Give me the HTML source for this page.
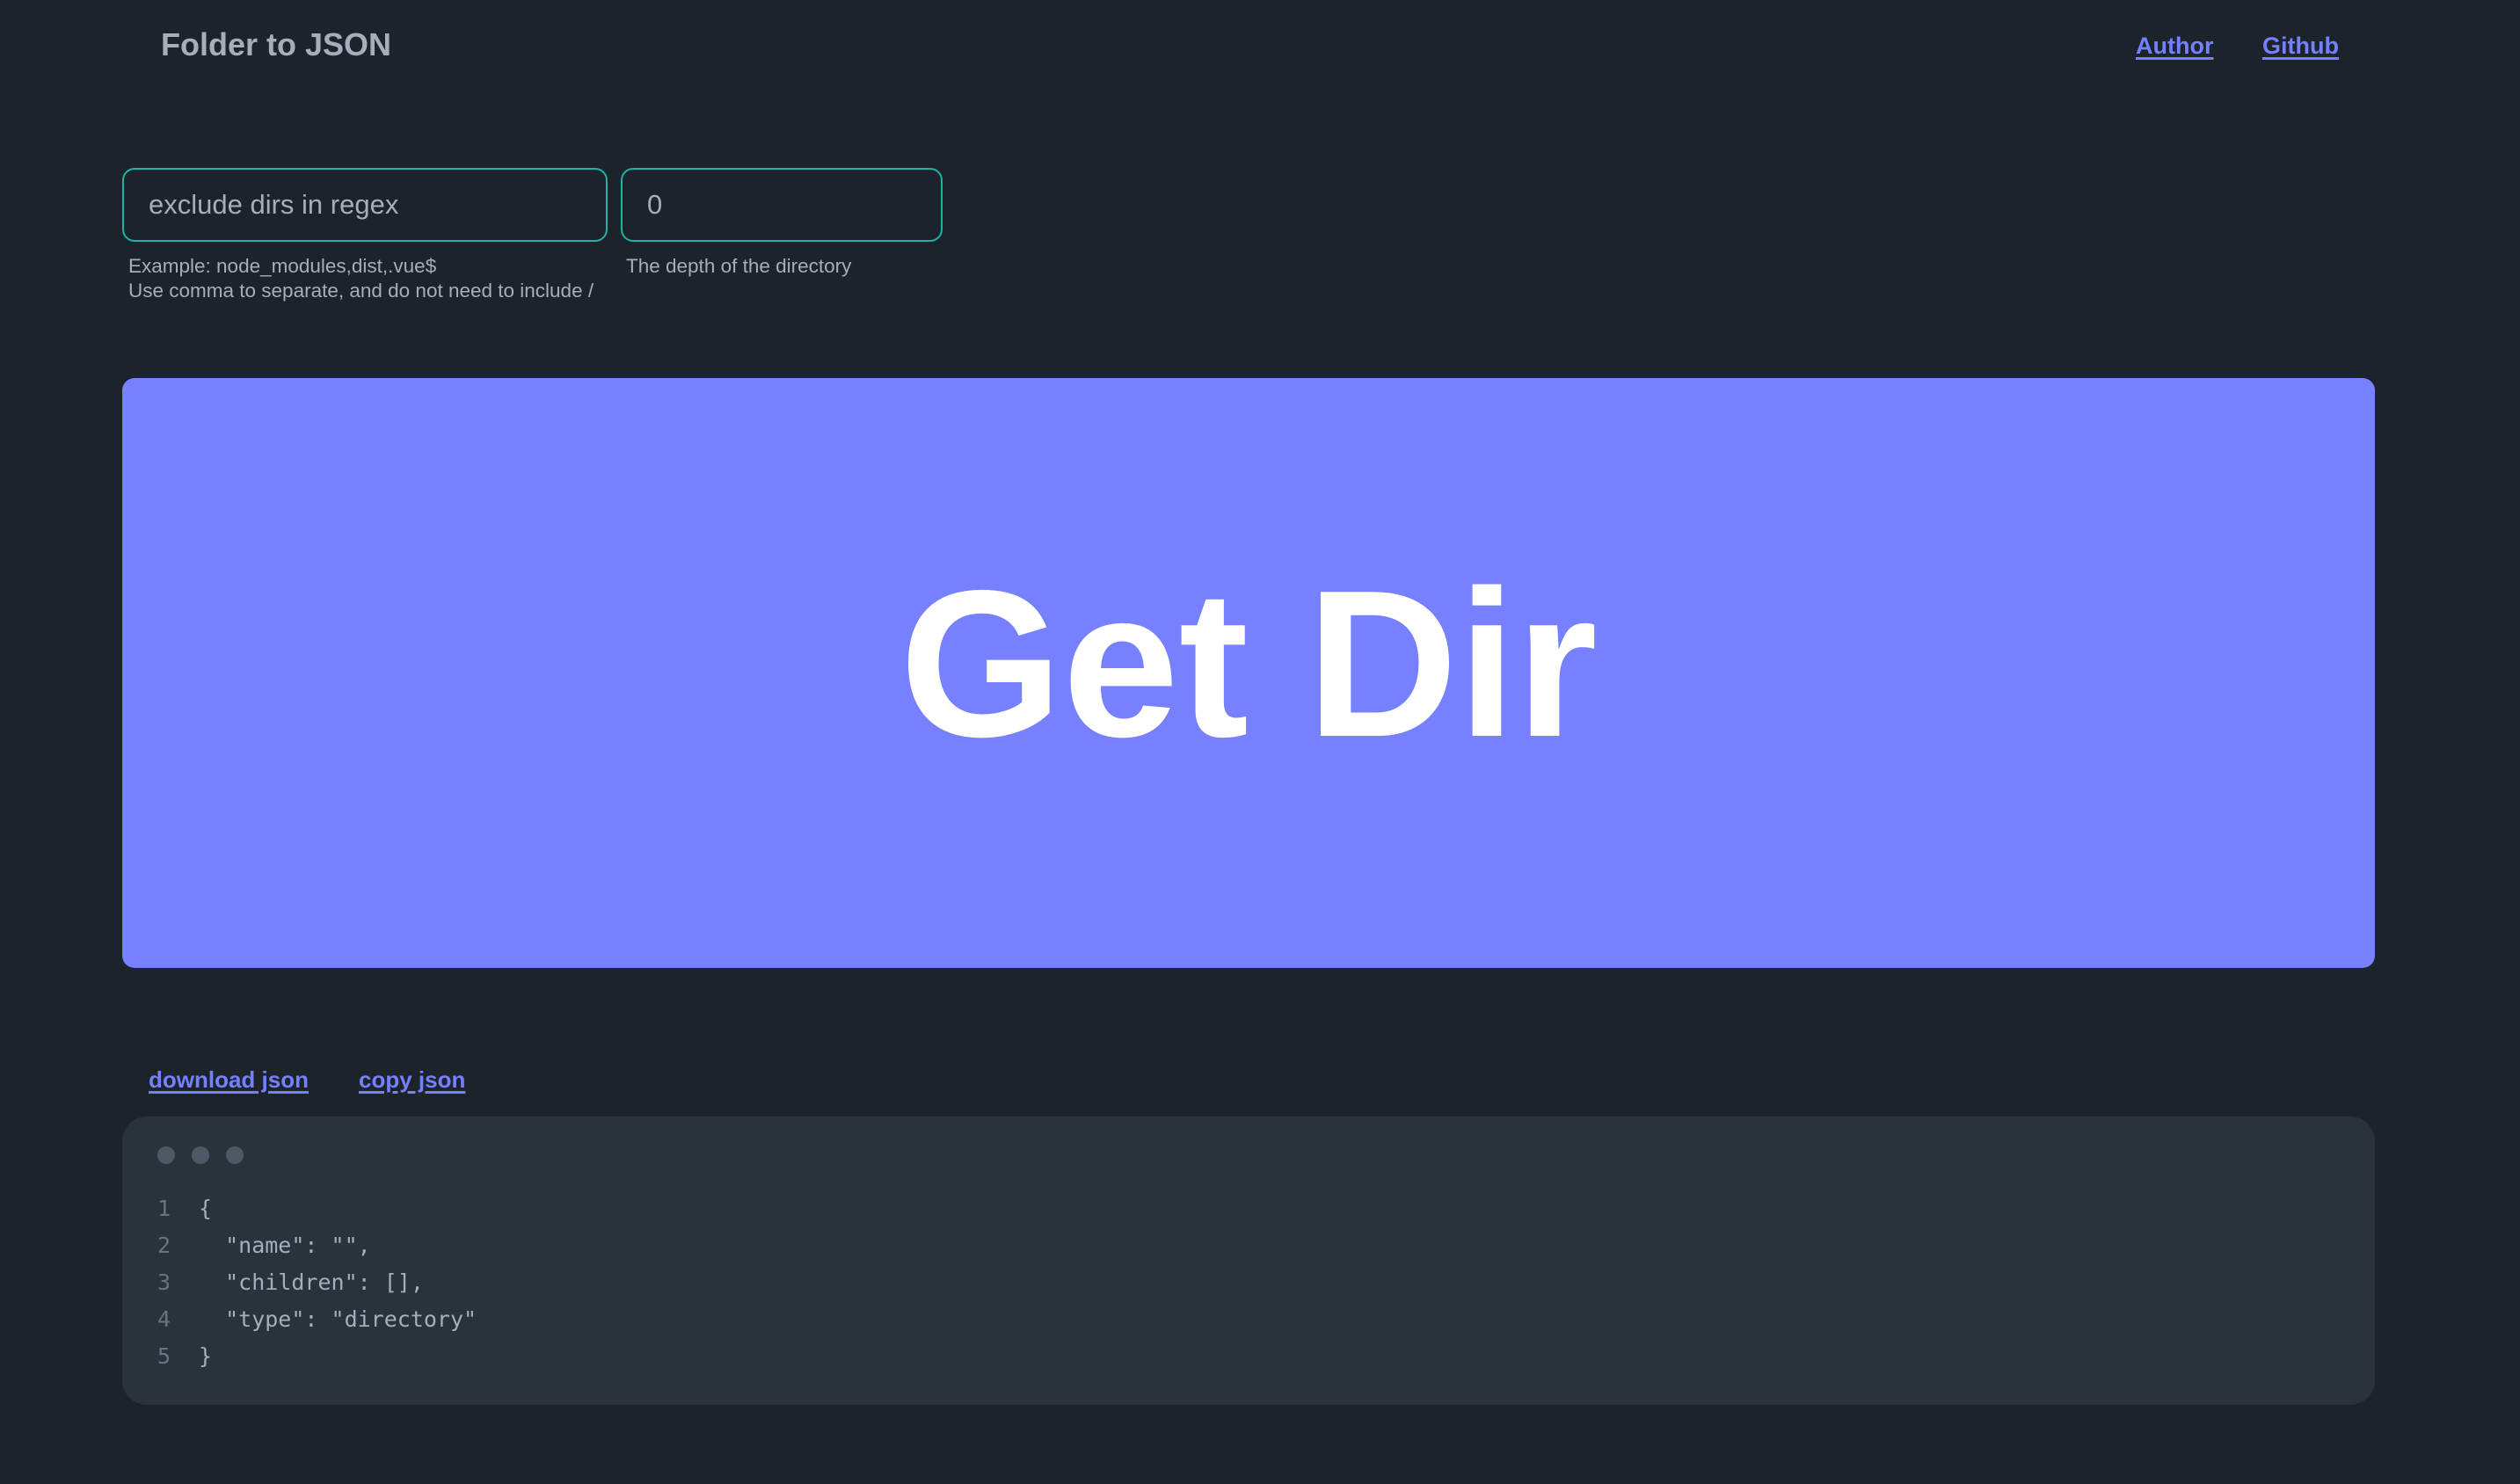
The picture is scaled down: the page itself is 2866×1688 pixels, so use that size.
<!DOCTYPE html>
<html><head><meta charset="utf-8"><style>
*{box-sizing:border-box;margin:0;padding:0}
html,body{width:2866px;height:1688px;background:#1d232a;overflow:hidden;font-family:"Liberation Sans","DejaVu Sans",sans-serif;color:#a6adbb}
.abs{position:absolute}
a{color:#7480ff;font-weight:bold;text-decoration:underline;text-underline-offset:4px;text-decoration-thickness:3px}
.title{left:183px;top:28px;font-size:36px;font-weight:bold;color:#a6adbb;line-height:46px}
.nav{top:36px;font-size:27px;line-height:32px}
.inp{top:191px;height:84px;border:2px solid #1fb2a6;border-radius:14px;font-size:31px;line-height:80px;padding-left:28px;color:#a6adbb}
.help{font-size:22.5px;line-height:28px;color:#a6adbb}
.btn{left:139px;top:430px;width:2562px;height:671px;background:#7780ff;border-radius:14px;color:#fff;font-weight:bold;font-size:238px;text-align:center;line-height:651px}
.links{top:1212px;font-size:26px;line-height:32px}
.code{left:139px;top:1270px;width:2562px;height:328px;background:#2a323c;border-radius:28px}
.dot{width:20px;height:20px;border-radius:50%;background:#4f5866;top:34px}
.ln{font-family:"DejaVu Sans Mono","Liberation Mono",monospace;font-size:25px;line-height:42px;white-space:pre}
</style></head><body>
<div class="abs title">Folder to JSON</div>
<a class="abs nav" style="left:2429px">Author</a>
<a class="abs nav" style="left:2573px">Github</a>

<div class="abs inp" style="left:139px;width:552px">exclude dirs in regex</div>
<div class="abs inp" style="left:706px;width:366px">0</div>
<div class="abs help" style="left:146px;top:289px">Example: node_modules,dist,.vue$<br>Use comma to separate, and do not need to include /</div>
<div class="abs help" style="left:712px;top:289px">The depth of the directory</div>

<div class="abs btn">Get Dir</div>

<a class="abs links" style="left:169px">download json</a>
<a class="abs links" style="left:408px">copy json</a>

<div class="abs code">
<div class="abs dot" style="left:40px"></div>
<div class="abs dot" style="left:79px"></div>
<div class="abs dot" style="left:118px"></div>
<div class="abs ln" style="left:40px;top:84px;color:#6b7280">1
2
3
4
5</div>
<div class="abs ln" style="left:87px;top:84px;color:#a6adbb">{
  "name": "",
  "children": [],
  "type": "directory"
}</div>
</div>
</body></html>
